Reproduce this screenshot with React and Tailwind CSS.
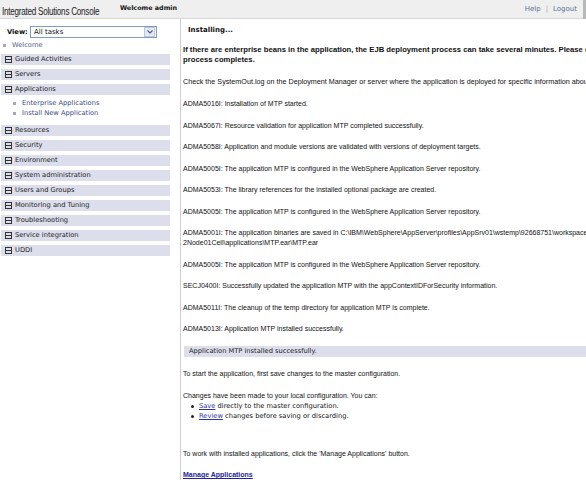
import React from 'react'

const verdana = { fontFamily: '"DejaVu Sans", Verdana, sans-serif' }

const Minus = () => (
  <span className="inline-flex items-center justify-center w-[7px] h-[7px] border border-[#333] mr-[3px] shrink-0">
    <span className="block w-[5px] h-px bg-[#333]" />
  </span>
)

const NavBar = ({ label, className = '' }) => (
  <div className={`flex items-center h-[11px] w-[169px] ml-px pl-[4px] bg-[#dcdeeb] text-[6.7px] text-[#222] ${className}`}>
    <Minus />
    <span className="leading-none">{label}</span>
  </div>
)

const SubItem = ({ label }) => (
  <div className="flex items-center h-[10px] pl-[13px] text-[6.7px] text-[#3d4a86]">
    <span className="block w-[3px] h-[3px] bg-[#a8a8b8] mr-[6px]" />
    <span className="leading-none">{label}</span>
  </div>
)

const Msg = ({ children, className = 'mt-[11.5px]' }) => (
  <p className={`leading-[10px] whitespace-nowrap ${className}`}>{children}</p>
)

const messages = [
  'ADMA5016I: Installation of MTP started.',
  'ADMA5067I: Resource validation for application MTP completed successfully.',
  'ADMA5058I: Application and module versions are validated with versions of deployment targets.',
  'ADMA5005I: The application MTP is configured in the WebSphere Application Server repository.',
  'ADMA5053I: The library references for the installed optional package are created.',
  'ADMA5005I: The application MTP is configured in the WebSphere Application Server repository.',
]

const messagesAfter = [
  'ADMA5005I: The application MTP is configured in the WebSphere Application Server repository.',
  'SECJ0400I: Successfully updated the application MTP with the appContextIDForSecurity information.',
  'ADMA5011I: The cleanup of the temp directory for application MTP is complete.',
  'ADMA5013I: Application MTP installed successfully.',
]

export default function App() {
  return (
    <div className="w-[586px] h-[480px] overflow-hidden bg-white text-black">
      {/* Header */}
      <div className="flex items-center h-[19px] bg-[#efefef] border-b border-[#d6d6d6]">
        <div className="w-[118px] shrink-0 ml-[2px] whitespace-nowrap">
          <span
            className="inline-block origin-left scale-x-[0.81] text-[10px] leading-none text-[#222] tracking-[-0.3px]"
            style={{ fontFamily: '"Liberation Sans", Arial, sans-serif' }}
          >
            Integrated Solutions Console
          </span>
        </div>
        <span className="text-[6.4px] font-bold text-[#111]" style={verdana}>
          Welcome admin
        </span>
        <div className="ml-auto flex items-center text-[7px] text-[#5b7196]" style={verdana}>
          <span>Help</span>
          <span className="mx-[5px] text-[#9aa5ba]">|</span>
          <span>Logout</span>
        </div>
        <div className="ml-[6px] w-[3px] h-[19px] bg-[#b8b8b8]" />
      </div>

      <div className="flex h-[461px]">
        {/* Sidebar */}
        <div className="w-[181px] shrink-0 border-r border-[#cfcfcf]" style={verdana}>
          <div className="flex items-center mt-[7px] h-[12px]">
            <span className="ml-[7px] w-[23px] text-[6.7px] font-bold text-[#111]">View:</span>
            <div className="flex items-center w-[127px] h-[12px] border border-[#7f9db9] bg-white">
              <span className="pl-[3px] text-[7px] leading-none text-[#111]">All tasks</span>
              <span className="ml-auto mr-px flex items-center justify-center w-[11px] h-[10px] bg-[#e4e8f2] border border-[#b9c6dc]">
                <svg width="6" height="4" viewBox="0 0 6 4">
                  <path d="M0.5 0.5 L3 3 L5.5 0.5" fill="none" stroke="#4d6185" strokeWidth="1.2" />
                </svg>
              </span>
            </div>
          </div>
          <div className="flex items-center h-[10px] mt-[2px] pl-[3px] text-[6.7px] text-[#55628e]">
            <span className="block w-[3px] h-[3px] bg-[#a8a8b8] mr-[6px]" />
            <span className="leading-none">Welcome</span>
          </div>
          <NavBar label="Guided Activities" className="mt-[4px]" />
          <NavBar label="Servers" className="mt-[4px]" />
          <NavBar label="Applications" className="mt-[4px]" />
          <div className="mt-[3px]">
            <SubItem label="Enterprise Applications" />
            <SubItem label="Install New Application" />
          </div>
          <NavBar label="Resources" className="mt-[7px]" />
          {[
            'Security',
            'Environment',
            'System administration',
            'Users and Groups',
            'Monitoring and Tuning',
            'Troubleshooting',
            'Service integration',
            'UDDI',
          ].map((l) => (
            <NavBar key={l} label={l} className="mt-[4px]" />
          ))}
        </div>

        {/* Main */}
        <div
          className="flex-1 overflow-hidden pl-[2px] text-[7px] text-[#111]"
          style={{ fontFamily: '"Liberation Sans", Arial, sans-serif' }}
        >
          <p className="mt-[6px] pl-[5px] leading-[10px] font-bold text-[7px]" style={verdana}>
            Installing...
          </p>
          <div className="mt-[10px] font-bold text-[7.7px] leading-[10px] whitespace-nowrap">
            <p>
              If there are enterprise beans in the application, the EJB deployment process can take several minutes. Please do not save the configuration until the
            </p>
            <p>process completes.</p>
          </div>
          <Msg className="mt-[12px] text-[7.2px]">
            Check the SystemOut.log on the Deployment Manager or server where the application is deployed for specific information about the EJB deployment process as it occurs.
          </Msg>
          <Msg className="mt-[12px]">{messages[0]}</Msg>
          {messages.slice(1).map((m, i) => (
            <Msg key={i}>{m}</Msg>
          ))}
          <div className="mt-[11.5px] leading-[10px] whitespace-nowrap">
            <p>
              ADMA5001I: The application binaries are saved in C:\IBM\WebSphere\AppServer\profiles\AppSrv01\wstemp\92668751\workspace\cells\ibm-server1Node01Cell\nodes\ibm-server1Node0
            </p>
            <p>2Node01Cell\applications\MTP.ear\MTP.ear</p>
          </div>
          {messagesAfter.map((m, i) => (
            <Msg key={i}>{m}</Msg>
          ))}

          <div
            className="mt-[11.5px] ml-px flex items-center h-[11px] pl-[5px] bg-[#dcdeeb] text-[6.7px] text-[#222] whitespace-nowrap"
            style={verdana}
          >
            Application MTP installed successfully.
          </div>

          <Msg className="mt-[12.5px]">To start the application, first save changes to the master configuration.</Msg>
          <Msg className="mt-[12px]">Changes have been made to your local configuration. You can:</Msg>
          <ul className="text-[6.7px] leading-[10px] whitespace-nowrap" style={verdana}>
            <li className="flex items-center pl-[8px]">
              <span className="block w-[3px] h-[3px] rounded-full bg-[#222] mr-[5px]" />
              <span className="text-[#2c34a4] underline">Save </span>
              <span>&nbsp;directly to the master configuration.</span>
            </li>
            <li className="flex items-center pl-[8px]">
              <span className="block w-[3px] h-[3px] rounded-full bg-[#222] mr-[5px]" />
              <span className="text-[#2c34a4] underline">Review</span>
              <span>&nbsp;changes before saving or discarding.</span>
            </li>
          </ul>
          <Msg className="mt-[28px]">To work with installed applications, click the 'Manage Applications' button.</Msg>
          <Msg className="mt-[11px]">
            <span className="font-bold text-[#23239a] underline">Manage Applications</span>
          </Msg>
        </div>
      </div>
    </div>
  )
}
